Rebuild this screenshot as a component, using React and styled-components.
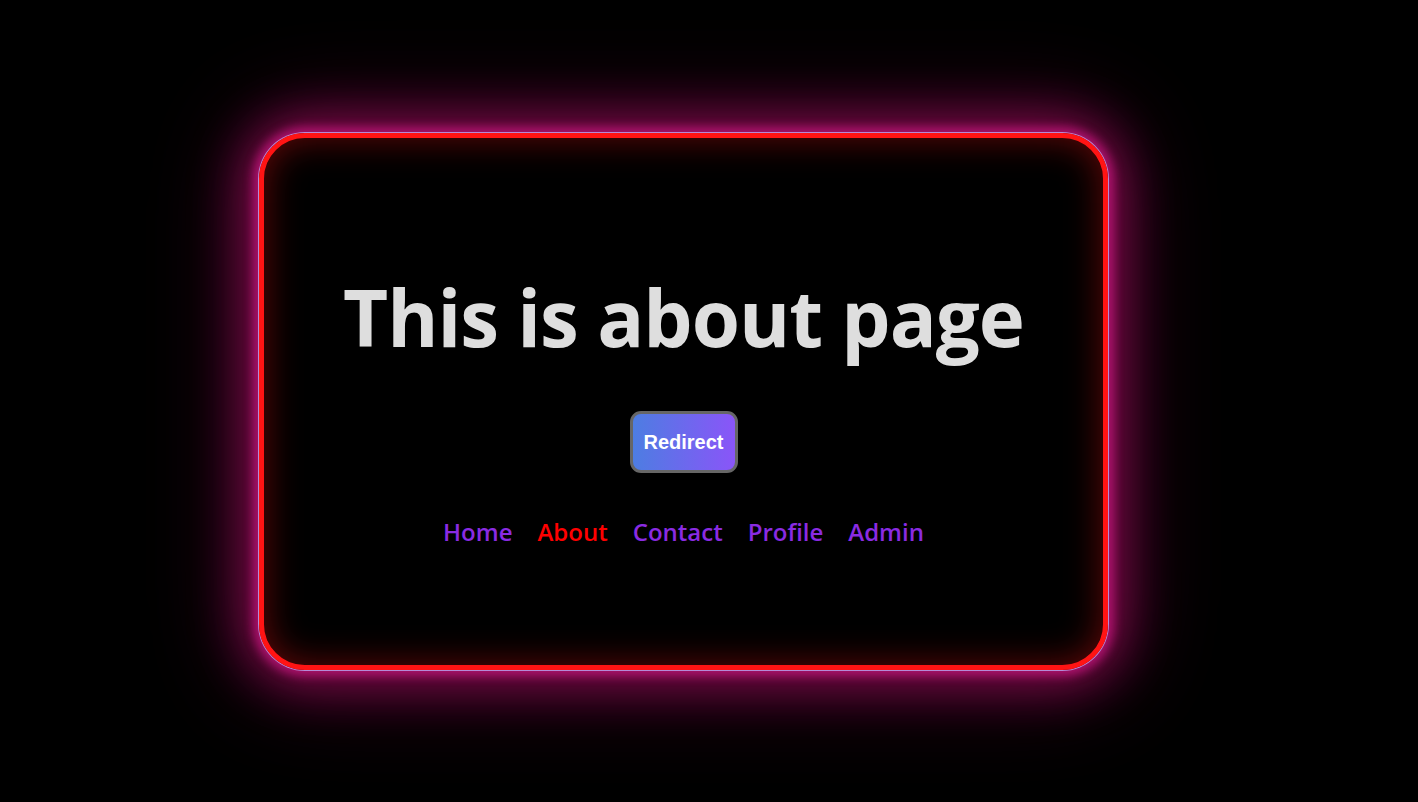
import React from "react"
import styled, { createGlobalStyle } from "styled-components"

const GlobalStyle = createGlobalStyle`
  html, body {
    margin: 0;
    padding: 0;
    background: #000;
  }
  body {
    font-family: "Open Sans", "Noto Sans", sans-serif;
  }
`

const Page = styled.div`
  display: flex;
  align-items: center;
  justify-content: center;
  height: 802px;
  padding-right: 51px;
  box-sizing: border-box;
  overflow: hidden;
`

const Card = styled.div`
  box-sizing: border-box;
  width: 849px;
  height: 537px;
  padding-top: 133px;
  border: 5px solid #ff1414;
  border-radius: 46px;
  display: flex;
  flex-direction: column;
  align-items: center;
  box-shadow:
    0 0 0 1px #b48ad8,
    0 0 10px 6px #a8126a,
    0 0 50px 14px #800a4c,
    0 0 90px 22px #3a0522,
    inset 0 0 36px rgba(255, 20, 20, 0.4);
`

const Title = styled.h1`
  margin: 0 0 47px;
  font-size: 78px;
  font-weight: 700;
  color: #dedede;
  letter-spacing: -1px;
  line-height: 1.2;
`

const Button = styled.button`
  width: 108px;
  height: 62px;
  border: 3px solid #666;
  border-radius: 11px;
  background: linear-gradient(90deg, #4d7de2, #8a55f8);
  color: #fff;
  font-family: "Liberation Sans", Arial, sans-serif;
  font-weight: 700;
  font-size: 20px;
  cursor: pointer;
  padding: 0;
`

const Nav = styled.nav`
  display: flex;
  gap: 25px;
  margin-top: 42px;
`

const NavLink = styled.a`
  font-size: 24px;
  font-weight: 600;
  color: ${props => (props.active ? "#ff0000" : "#8a2be2")};
  text-decoration: none;
  cursor: pointer;
`

const links = ["Home", "About", "Contact", "Profile", "Admin"]

export default function App() {
  return (
    <>
      <GlobalStyle />
      <Page>
        <Card>
          <Title>This is about page</Title>
          <Button>Redirect</Button>
          <Nav>
            {links.map(link => (
              <NavLink key={link} active={link === "About" ? 1 : 0}>
                {link}
              </NavLink>
            ))}
          </Nav>
        </Card>
      </Page>
    </>
  )
}
